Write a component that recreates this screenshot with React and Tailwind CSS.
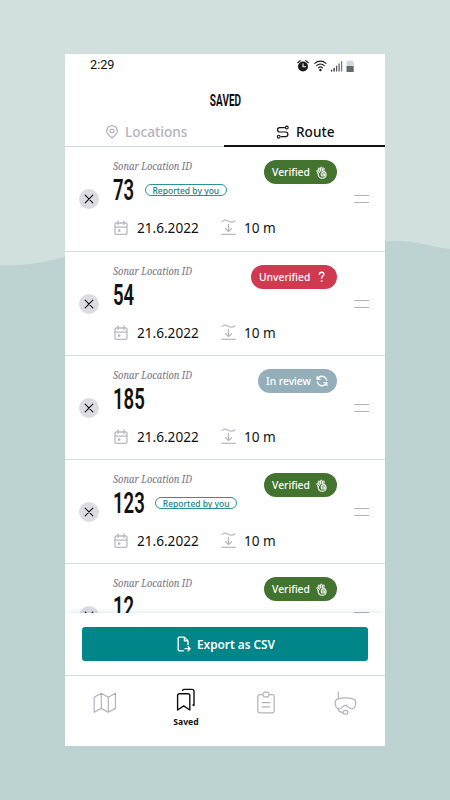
import React from "react";

const locations = [
  { id: "73", reported: true, status: "verified", date: "21.6.2022", depth: "10 m" },
  { id: "54", reported: false, status: "unverified", date: "21.6.2022", depth: "10 m" },
  { id: "185", reported: false, status: "review", date: "21.6.2022", depth: "10 m" },
  { id: "123", reported: true, status: "verified", date: "21.6.2022", depth: "10 m" },
  { id: "12", reported: false, status: "verified", date: "21.6.2022", depth: "10 m" },
];

const stroke = {
  fill: "none",
  stroke: "currentColor",
  strokeLinecap: "round",
  strokeLinejoin: "round",
};

const Waves = () => (
  <svg className="absolute inset-0" width="450" height="800" viewBox="0 0 450 800">
    <path
      d="M0 265C20 266 38 264 65 257C140 238 190 262 250 262C310 262 350 241 392 241C415 240 428 246 450 249V800H0Z"
      fill="#bdd3d2"
    />
  </svg>
);

const StatusIcons = () => (
  <svg width="58" height="14" viewBox="0 0 58 14" className="text-[#1c1c1c]">
    <circle cx="6" cy="7.5" r="5" fill="currentColor" />
    <path {...stroke} d="M.8 3.7 3.2 1.6M11.2 3.7 8.8 1.6" strokeWidth="1.2" />
    <path {...stroke} d="M6 4.7V7.7H8.6" stroke="#fff" strokeWidth="1.1" />
    <path
      {...stroke}
      d="M17.8 4.3C21 1.4 25.8 1.4 29 4.3M19.6 6.6C21.8 4.6 25 4.6 27.2 6.6M21.4 8.8C22.6 7.7 24.2 7.7 25.4 8.8"
      strokeWidth="1.1"
    />
    <circle cx="23.4" cy="11" r="1.2" fill="currentColor" />
    <path {...stroke} strokeLinecap="butt" d="M34.6 12.5V10.8M37.1 12.5V9" strokeWidth="1.2" />
    <path {...stroke} strokeLinecap="butt" d="M39.6 12.5V6.8M42.1 12.5V4.6" strokeWidth="1.2" opacity=".75" />
    <path {...stroke} strokeLinecap="butt" d="M44.6 12.5V2" strokeWidth="1.2" opacity=".6" />
    <path d="M49.5 2.3H51.2V1.4H54.8V2.3H56.7V7H49.5Z" fill="#cfd8dc" />
    <path d="M49.5 7H56.7V13H49.5Z" fill="#686868" />
  </svg>
);

const PinIcon = () => (
  <svg width="14" height="14" viewBox="0 0 14 14">
    <path {...stroke} d="M7 13C4.6 11 1.7 8.8 1.7 6A5.3 5.3 0 0 1 12.3 6C12.3 8.8 9.4 11 7 13Z" strokeWidth="1.3" />
    <circle {...stroke} cx="7" cy="6" r="1.9" strokeWidth="1.2" />
  </svg>
);

const RouteIcon = () => (
  <svg width="14" height="14" viewBox="0 0 14 14">
    <circle {...stroke} cx="10.8" cy="2.5" r="1.4" strokeWidth="1.1" />
    <circle {...stroke} cx="2.7" cy="11.7" r="1.4" strokeWidth="1.1" />
    <path
      {...stroke}
      d="M8.4 2.6H3.7A2.2 2.2 0 0 0 3.7 7H9.6A2.3 2.3 0 0 1 9.6 11.6H5.2"
      strokeWidth="1.2"
    />
  </svg>
);

const CalendarIcon = () => (
  <svg width="14" height="16" viewBox="0 0 14 16">
    <rect {...stroke} x="1" y="3" width="12" height="11.4" rx="1.2" strokeWidth="1.3" />
    <path {...stroke} d="M1.1 7.1H12.9M4.1 1V4.6M9.9 1V4.6" strokeWidth="1.3" />
    <rect x="3.9" y="9.4" width="2.5" height="2.4" fill="currentColor" />
  </svg>
);

const DepthIcon = () => (
  <svg width="15" height="17" viewBox="0 0 15 17">
    <path {...stroke} d="M1 2.6C3 .7 5 .8 7.2 2.2C9.6 3.6 11.6 3.7 14 1.8" strokeWidth="1.3" />
    <path {...stroke} d="M7.5 5.3V12.1M4.5 9.6 7.5 12.4 10.5 9.6" strokeWidth="1.3" />
    <path {...stroke} d="M.8 15.4H14.2" strokeWidth="1.3" />
  </svg>
);

const HandIcon = () => (
  <svg width="11" height="13" viewBox="0 0 11 13">
    <path
      {...stroke}
      d="M2.1 7.6.9 5.2C.6 4.3 1.5 3.9 2 4.6L3.4 6.6 2.4 2.7C2.2 1.8 3.3 1.5 3.6 2.3L4.8 5.4 4.6 1.7C4.6.8 5.8.7 6 1.6L6.4 4.8 7 2.4C7.3 1.5 8.4 1.8 8.2 2.7L7.7 5.6"
      strokeWidth="1"
    />
    <path
      {...stroke}
      d="M2.1 7.6C2.2 10.4 3.8 12.3 6.3 12.3C8.6 12.3 10.2 10.6 10.1 8.5C10 6.8 9 5.4 7.7 5.6C6.5 5.9 5.2 7.2 5.2 8.6C5.2 9.8 6.2 10.2 7.3 10C8.4 9.8 8.9 9 8.6 8.2C8.2 7.6 7.3 7.9 6.9 8.4"
      strokeWidth="1.1"
    />
  </svg>
);

const QuestionIcon = () => (
  <svg width="12" height="12" viewBox="0 0 12 12">
    <path {...stroke} d="M3.4 3.4C3.5 1.9 4.4 1.2 5.6 1.2C6.9 1.2 7.8 2 7.8 3.2C7.8 5 5.6 5 5.6 7.2" strokeWidth="1.4" />
    <circle cx="5.6" cy="10" r=".9" fill="currentColor" />
  </svg>
);

const ReviewIcon = () => (
  <svg width="12" height="12" viewBox="0 0 12 12">
    <path
      {...stroke}
      d="M1.2 1.6V4.4H4M1.4 4.2C2.6 1.9 4.8.9 7 1.4C8.9 1.8 10.2 3.2 10.7 5.2M10.8 10.4V7.6H8M10.6 7.8C9.4 10.1 7.2 11.1 5 10.6C3.1 10.2 1.8 8.8 1.3 6.8"
      strokeWidth="1.3"
    />
  </svg>
);

const ExportIcon = () => (
  <svg width="14" height="16" viewBox="0 0 14 16">
    <path
      {...stroke}
      d="M6.5 14.8H2.2A1 1 0 0 1 1.2 13.8V2.2A1 1 0 0 1 2.2 1.2H7.4L11 4.9V8.8M7.4 1.2V4.9H11"
      strokeWidth="1.3"
    />
    <path {...stroke} d="M8 12.7H13M11.1 10.7 13.1 12.7 11.1 14.7" strokeWidth="1.3" />
  </svg>
);

const MapIcon = () => (
  <svg width="24" height="22" viewBox="0 0 24 22">
    <path
      {...stroke}
      d="M1.2 5.2 8.3 1.2 15.3 5.2 22.4 1.2V16.4L15.3 20.2 8.3 16.4 1.2 20.2ZM8.3 1.2V16.4M15.3 5.2V20.2"
      strokeWidth="1.2"
    />
  </svg>
);

const SavedIcon = () => (
  <svg width="20" height="24" viewBox="0 0 20 24">
    <path
      {...stroke}
      d="M1.6 22V7.6A1.8 1.8 0 0 1 3.4 5.8H12A1.8 1.8 0 0 1 13.8 7.6V22L7.7 17.8Z"
      strokeWidth="1.4"
    />
    <path {...stroke} d="M6.6 2.4Q7 1.4 8.2 1.4H16A2 2 0 0 1 18 3.4V17.6L16.9 17" strokeWidth="1.4" />
  </svg>
);

const ClipboardIcon = () => (
  <svg width="18" height="23" viewBox="0 0 18 23">
    <path
      {...stroke}
      d="M5.6 3.7H2.6A1.8 1.8 0 0 0 .8 5.5V20A1.8 1.8 0 0 0 2.6 21.8H15.4A1.8 1.8 0 0 0 17.2 20V5.5A1.8 1.8 0 0 0 15.4 3.7H12.4"
      strokeWidth="1.2"
    />
    <path {...stroke} d="M7.3 1.2H10.7L12.4 3.7 10.9 5.8H7.1L5.6 3.7ZM5.2 11.6H12.8M5.2 15.9H12.8" strokeWidth="1.2" />
  </svg>
);

const DiveIcon = () => (
  <svg width="23" height="24" viewBox="0 0 23 24">
    <path {...stroke} d="M4.3.9V7.8" strokeWidth="1.2" />
    <path
      {...stroke}
      d="M3 8.2C8.5 6.5 14.5 6.5 20 8.2C21.3 8.8 22 10.8 21.7 13C21.3 15.8 19.6 17.8 17.6 17.8C14.7 17.8 14 14.2 11.5 14.2C9 14.2 8.3 17.8 5.4 17.8C3.4 17.8 1.5 15.8 1.2 13C1 10.8 1.7 8.8 3 8.2Z"
      strokeWidth="1.2"
    />
    <path {...stroke} d="M4 17.7C4.3 20 6 21.5 8.9 21.6" strokeWidth="1.2" />
    <ellipse {...stroke} cx="11.4" cy="21.2" rx="2.5" ry="1.9" strokeWidth="1.2" />
  </svg>
);

const StatusBadge = ({ status }) => {
  switch (status) {
    case "unverified":
      return (
        <span className="flex h-6 w-[86px] items-center justify-between rounded-full bg-[#d03a50] pl-2 pr-[9px] text-[10.3px] font-medium text-white">
          <span className="pt-0.5">Unverified</span>
          <QuestionIcon />
        </span>
      );
    case "review":
      return (
        <span className="flex h-6 w-[79px] items-center justify-between rounded-full bg-[#94afba] pl-2 pr-[9px] text-[10.3px] font-medium text-white">
          <span className="pt-0.5">In review</span>
          <ReviewIcon />
        </span>
      );
    default:
      return (
        <span className="flex h-6 w-[73px] items-center justify-between rounded-full bg-[#43742f] pl-2 pr-[10px] text-[10.3px] font-medium text-white">
          <span className="pt-0.5">Verified</span>
          <HandIcon />
        </span>
      );
  }
};

const LocationRow = ({ item }) => (
  <li className="flex h-[104px] shrink-0 border-b border-[#d3dfde] pl-[14px] pr-4 first:h-[105px]">
    <button className="mt-[42px] flex size-5 shrink-0 items-center justify-center rounded-full bg-[#dddce2]">
      <svg width="10" height="10" viewBox="0 0 10 10">
        <path {...stroke} d="M1.2 1.2 8.8 8.8M8.8 1.2 1.2 8.8" strokeWidth="1.2" />
      </svg>
    </button>

    <div className="ml-[14px] w-0 flex-1 whitespace-nowrap pt-3">
      <p className="h-[14px] w-[100px] origin-left scale-x-[0.81] font-['Noto_Serif','DejaVu_Serif',serif] text-[11.5px] italic leading-[14px] text-[#767286]">
        Sonar Location ID
      </p>
      <div className="flex h-[34px] items-center">
        <span
          className="block h-[34px] origin-left scale-x-[0.64] font-['Roboto',sans-serif] text-[29px] font-semibold leading-[34px]"
          style={{ width: `${item.id.length * 10.4}px` }}
        >
          {item.id}
        </span>
        {item.reported && (
          <span className="ml-[11px] flex h-3 w-[82px] shrink-0 items-center justify-center rounded-full border border-[#2b9391] pt-px text-[8.5px] font-medium leading-[10px] text-[#16847f]">
            Reported by you
          </span>
        )}
      </div>
      <div className="flex h-[42px] items-center text-[13.6px]">
        <span className="mb-px ml-[1px] shrink-0 text-[#b9b8c3]">
          <CalendarIcon />
        </span>
        <span className="ml-[9px] w-[84px] shrink-0">{item.date}</span>
        <span className="mb-0.5 shrink-0 text-[#b9b8c3]">
          <DepthIcon />
        </span>
        <span className="ml-2">{item.depth}</span>
      </div>
    </div>

    <div className="mt-[13px]">
      <StatusBadge status={item.status} />
    </div>
    <div className="ml-[17px] mt-12 h-2 w-[15px] border-y border-[#b4b2c0]" />
  </li>
);

const App = () => {
  return (
    <div className="relative flex h-[800px] w-[450px] items-start justify-center overflow-hidden bg-[#d1e0de] pt-[54px] font-['Noto_Sans','Open_Sans',sans-serif] text-[#111]">
      <Waves />

      <main className="relative flex h-[692px] w-80 flex-col bg-white">
        <div className="flex h-[23px] items-center justify-between pl-[25px] pr-[30px] font-['Roboto',sans-serif] text-[12.7px] leading-none">
          <span>2:29</span>
          <StatusIcons />
        </div>

        <header className="flex h-[47px] items-center justify-center">
          <h1 className="scale-x-[0.59] font-['Roboto',sans-serif] text-[17px] font-bold leading-none">
            SAVED
          </h1>
        </header>

        <nav className="flex h-[23px] shrink-0 text-[13.6px] font-medium">
          <button className="flex w-[159px] items-center gap-1.5 border-b border-[#c8dcdd] pb-[7px] pl-10 leading-none text-[#b3b1bd]">
            <PinIcon />
            Locations
          </button>
          <button className="flex flex-1 items-center gap-1.5 border-b-2 border-[#111] pb-1.5 pl-[52px] leading-none">
            <RouteIcon />
            Route
          </button>
        </nav>

        <ul className="flex h-[466px] shrink-0 flex-col overflow-hidden">
          {locations.map((item) => (
            <LocationRow key={item.id} item={item} />
          ))}
        </ul>

        <div className="relative h-[63px] shrink-0 border-b border-[#cddcdc] bg-white px-[17px] pt-[14px] shadow-[0_-4px_5px_-3px_rgba(0,134,136,0.16)]">
          <button className="flex h-[34px] w-full items-center justify-center gap-1.5 rounded-[3px] bg-[#008688] pl-0.5 text-[11.8px] font-semibold text-white">
            <ExportIcon />
            <span className="pt-px">Export as CSV</span>
          </button>
        </div>

        <footer className="relative flex flex-1 bg-white text-[#b3b2bf]">
          <a className="flex w-20 justify-center pt-4">
            <MapIcon />
          </a>
          <a className="flex w-20 flex-col items-center pl-0.5 pt-3 text-[#111]">
            <SavedIcon />
            <span className="mt-1 text-[8.6px] font-bold leading-3">Saved</span>
          </a>
          <a className="flex w-20 justify-center pl-px pt-[15px]">
            <ClipboardIcon />
          </a>
          <a className="flex w-20 justify-center pl-px pt-[15px]">
            <DiveIcon />
          </a>
        </footer>
      </main>
    </div>
  );
};

export default App;
